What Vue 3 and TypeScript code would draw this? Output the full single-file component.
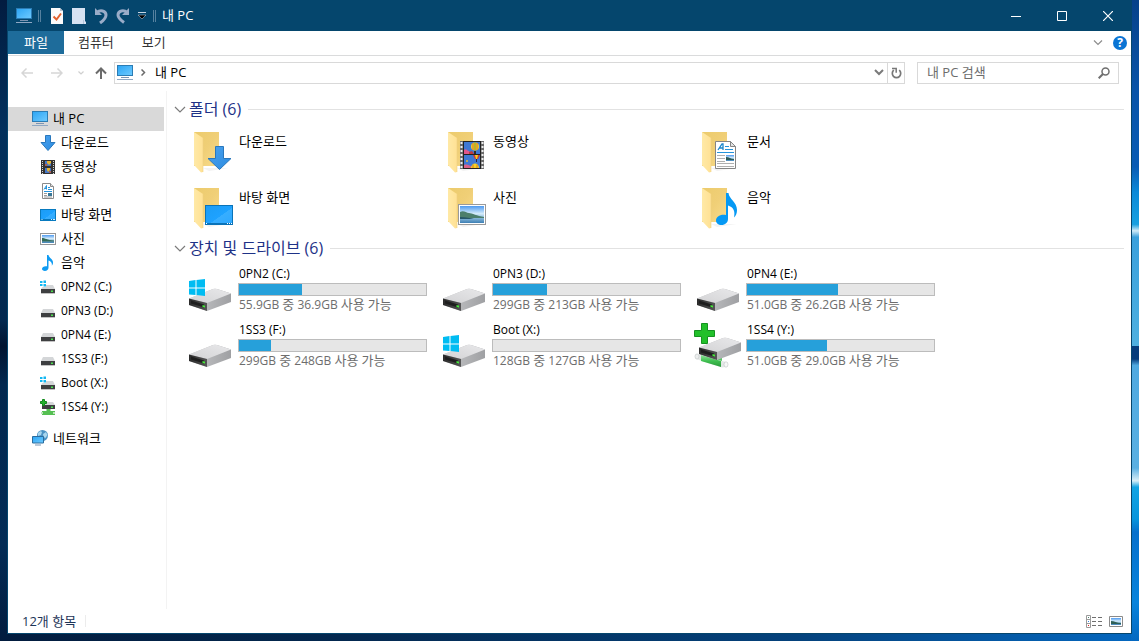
<script setup lang="ts">
import { ref } from 'vue'

interface NavItem {
  label: string
  icon: string
  latin?: boolean
}
interface Folder {
  label: string
  icon: string
}
interface Drive {
  label: string
  icon: string
  total: string
  free: string
  used: number
}

const places: NavItem[] = [
  { label: '다운로드', icon: 's-download' },
  { label: '동영상', icon: 's-video' },
  { label: '문서', icon: 's-doc' },
  { label: '바탕 화면', icon: 's-desktop' },
  { label: '사진', icon: 's-photo' },
  { label: '음악', icon: 's-music' },
  { label: '0PN2 (C:)', icon: 's-windrive', latin: true },
  { label: '0PN3 (D:)', icon: 's-drive', latin: true },
  { label: '0PN4 (E:)', icon: 's-drive', latin: true },
  { label: '1SS3 (F:)', icon: 's-drive', latin: true },
  { label: 'Boot (X:)', icon: 's-windrive', latin: true },
  { label: '1SS4 (Y:)', icon: 's-netdrive', latin: true },
]

const folders: Folder[] = [
  { label: '다운로드', icon: 'l-download' },
  { label: '동영상', icon: 'l-video' },
  { label: '문서', icon: 'l-doc' },
  { label: '바탕 화면', icon: 'l-desktop' },
  { label: '사진', icon: 'l-photo' },
  { label: '음악', icon: 'l-music' },
]

const drives: Drive[] = [
  { label: '0PN2 (C:)', icon: 'l-windrive', total: '55.9GB', free: '36.9GB', used: 33.7 },
  { label: '0PN3 (D:)', icon: 'l-drive', total: '299GB', free: '213GB', used: 29 },
  { label: '0PN4 (E:)', icon: 'l-drive', total: '51.0GB', free: '26.2GB', used: 48.6 },
  { label: '1SS3 (F:)', icon: 'l-drive', total: '299GB', free: '248GB', used: 17 },
  { label: 'Boot (X:)', icon: 'l-windrive', total: '128GB', free: '127GB', used: 0 },
  { label: '1SS4 (Y:)', icon: 'l-netdrive', total: '51.0GB', free: '29.0GB', used: 43 },
]

const query = ref('')
const foldersOpen = ref(true)
const drivesOpen = ref(true)
</script>

<template>
  <div class="desktop">
    <svg class="defs" aria-hidden="true">
      <defs>
        <linearGradient id="g-screen" x1="0" y1="0" x2="1" y2="1">
          <stop offset="0" stop-color="#2aa4f4" /><stop offset="1" stop-color="#6fcbff" />
        </linearGradient>
        <linearGradient id="g-desk" x1="0" y1="0" x2="1" y2="1">
          <stop offset="0" stop-color="#1b9cf5" /><stop offset=".55" stop-color="#1ea2ff" />
          <stop offset=".56" stop-color="#37aeff" /><stop offset="1" stop-color="#2ea8ff" />
        </linearGradient>
        <linearGradient id="g-back" x1="0" y1="0" x2="1" y2="1">
          <stop offset="0" stop-color="#eccb6c" /><stop offset=".5" stop-color="#f0cf77" /><stop offset="1" stop-color="#f9dc8c" />
        </linearGradient>
        <linearGradient id="g-front" x1="0" y1="0" x2="1" y2="0">
          <stop offset="0" stop-color="#ffe9a6" /><stop offset="1" stop-color="#ffe194" />
        </linearGradient>
        <linearGradient id="g-top" x1="0" y1="1" x2="1" y2="0">
          <stop offset="0" stop-color="#d3d3d5" /><stop offset="1" stop-color="#e8e8ea" />
        </linearGradient>
        <linearGradient id="g-side" x1="0" y1="0" x2="1" y2="0">
          <stop offset="0" stop-color="#c8c9cb" /><stop offset="1" stop-color="#9fa0a3" />
        </linearGradient>
        <linearGradient id="g-face" x1="0" y1="0" x2="1" y2="0">
          <stop offset="0" stop-color="#2b2b2b" /><stop offset="1" stop-color="#555" />
        </linearGradient>
        <linearGradient id="g-sky" x1="0" y1="0" x2="0" y2="1">
          <stop offset="0" stop-color="#4e9af0" /><stop offset=".45" stop-color="#d5ecfa" />
          <stop offset=".62" stop-color="#9fc9e4" /><stop offset="1" stop-color="#3d7fb4" />
        </linearGradient>
        <linearGradient id="g-arrow" x1="0" y1="0" x2="1" y2="1">
          <stop offset="0" stop-color="#4ba2ee" /><stop offset="1" stop-color="#2b8be0" />
        </linearGradient>
        <linearGradient id="g-pipe" x1="0" y1="0" x2="0" y2="1">
          <stop offset="0" stop-color="#8fe29a" /><stop offset=".5" stop-color="#3fbf50" /><stop offset="1" stop-color="#2c9a3b" />
        </linearGradient>
      </defs>

      <symbol id="s-pc" viewBox="0 0 16 16">
        <rect x="0.5" y="0.5" width="15" height="10" fill="url(#g-screen)" stroke="#2b7cb4" />
        <path d="M4 12.500h8" stroke="#7c95b3" /><path d="M0 14.500h16" stroke="#8fa8c4" />
      </symbol>
      <symbol id="s-download" viewBox="0 0 16 16">
        <path d="M5.500.5h5v7H15L8 15.500 1 7.500h4.500z" fill="url(#g-arrow)" stroke="#2a78bd" />
      </symbol>
      <symbol id="s-video" viewBox="0 0 16 16">
        <rect x="1" y="1" width="14" height="14" fill="#333" />
        <path d="M2.500 2v13M13.500 2v13" stroke="#d4d4d4" stroke-dasharray="1 1" />
        <path d="M5 2h6v5H5zM5 9h6v5H5z" fill="#4678c8" />
        <path d="M7 2h4v2L9 6 7 4zM7 9h3v2l-2 2-1-2z" fill="#e6b431" />
        <path d="M5 5h2v2H5zM9 12h2v2H9z" fill="#a8605a" />
      </symbol>
      <symbol id="s-doc" viewBox="0 0 16 16">
        <path d="M2.500.5h8l3 3v12h-11z" fill="#fff" stroke="#8a8a8a" />
        <path d="M10.500.5v3h3" fill="#ddd" stroke="#8a8a8a" />
        <path d="M4 6.500L6.500 2.500v4M5 5.500h2M8 4.500h2M8 6.500h4M4 8.500h8" fill="none" stroke="#2493db" />
        <path d="M4 10.500h3M4 12.500h3M4 14h8" stroke="#9b9b9b" />
        <path d="M8 10h4v3H8z" fill="#387696" />
      </symbol>
      <symbol id="s-desktop" viewBox="0 0 16 16">
        <rect x="0.5" y="2.500" width="15" height="11" fill="url(#g-desk)" stroke="#087abf" />
        <path d="M1 12.500h14" stroke="#0878bd" /><path d="M1.500 12.500h1M11 12.500h1M13 12.500h2" stroke="#d7efff" />
      </symbol>
      <symbol id="s-photo" viewBox="0 0 16 16">
        <rect x="0.5" y="2.500" width="15" height="11" fill="#fff" stroke="#969696" />
        <rect x="2" y="4" width="12" height="8" fill="url(#g-sky)" />
        <path d="M2 7c3 0 5 2 12 2.500v1H2z" fill="#356b58" />
      </symbol>
      <symbol id="s-music" viewBox="0 0 16 16">
        <path d="M7 0h1.500c.3 3 5 3.800 4.500 8.300-.1 1-.5 1.800-1.200 2.400.5-3-1-4.500-3.300-5.200v7.300c0 1.800-1.600 3.200-3.600 3.200-1.700 0-2.900-.9-2.900-2.200 0-1.700 2-3 5-2.600z" fill="#0f9bf2" />
      </symbol>
      <symbol id="s-drive" viewBox="0 0 16 16">
        <path d="M3 6h10l2 4H1z" fill="#d4d6d8" /><path d="M1 10h14v4H1z" fill="#3e3f41" />
        <path d="M1 14h14v.7H1z" fill="#aaa" /><path d="M11 11.500h2v1.500h-2z" fill="#4ae04e" />
      </symbol>
      <symbol id="s-windrive" viewBox="0 0 16 16">
        <path d="M4 6h9l2 4H1z" fill="#d4d6d8" /><path d="M1 10h14v4H1z" fill="#3e3f41" />
        <path d="M1 14h14v.7H1z" fill="#aaa" /><path d="M11 11.500h2v1.500h-2z" fill="#4ae04e" />
        <path d="M0 1h6v7H0z" fill="#fff" />
        <path d="M0 2h2.500v2H0zM3.500 1.500h2.500V4H3.500zM0 5h2.500v2H0zM3.500 5h2.500v2.500H3.500z" fill="#12b7f2" />
      </symbol>
      <symbol id="s-netdrive" viewBox="0 0 16 16">
        <path d="M4 3h9l2 3H2z" fill="#d4d6d8" /><path d="M2 6h13v4H2z" fill="#3e3f41" />
        <path d="M11 7.500h2V9h-2z" fill="#4ae04e" />
        <path d="M6.500 10h4v2H15v4H2v-4h4.500z" fill="#55c052" /><path d="M1 13h2v2H1zM13 13h2v2h-2z" fill="#bce5b9" />
        <path d="M2.500.5h2v2h2v2h-2v2h-2v-2h-2v-2h2z" fill="#22b52c" stroke="#128a1c" />
      </symbol>
      <symbol id="s-network" viewBox="0 0 16 16">
        <circle cx="10.500" cy="5.500" r="5.500" fill="#4c93c4" />
        <path d="M6 3c2-2 3-2 4-1L9 5 6 6zM11 4l3-2 1.500 3-2 3-2-1z" fill="#a9d6ee" />
        <path d="M.5 6.500h11v6.500H.5z" fill="url(#g-screen)" stroke="#2b6c9d" />
        <path d="M3 15h6" stroke="#7895b3" />
      </symbol>

      <symbol id="folder" viewBox="0 0 48 48">
        <path d="M17 40h26l-20 3z" fill="#f3f3f3" />
        <path d="M8 4h25v34H8z" fill="url(#g-back)" />
        <path d="M8 4l9 6v34l-2 .5L8 37z" fill="url(#g-front)" />
        <path d="M17 10v34" stroke="#efd083" stroke-width=".6" />
      </symbol>
      <symbol id="l-download" viewBox="0 0 48 48">
        <use href="#folder" />
        <path d="M29.500 18.500h8v12H45L33.500 41.500 22 30.500h7.500z" fill="url(#g-arrow)" stroke="#2a78bd" />
      </symbol>
      <symbol id="l-video" viewBox="0 0 48 48">
        <use href="#folder" />
        <rect x="20" y="13" width="24" height="28" fill="#6a6a6a" />
        <path d="M21.500 14v27M42.500 14v27" stroke="#eee" stroke-width="2" stroke-dasharray="2 2" />
        <rect x="23" y="13" width="18" height="28" fill="#222" />
        <path d="M24 14h16v12H24zM24 27h16v13H24z" fill="#3f78d4" />
        <path d="M24 22c2-2 3 1 5 1l2 3h-7z" fill="#e0568c" /><path d="M29 24l3-1 2 3h-5z" fill="#c23b3b" />
        <path d="M24 37c3-1 5 0 8 2v1h-8z" fill="#d9628a" />
        <ellipse cx="35" cy="18.500" rx="4" ry="4" fill="#f4d226" />
        <path d="M33 15v7M37 15v7" stroke="#d8742a" /><path d="M35 14.500v8" stroke="#7a9a2c" /><path d="M34 23h2v3h-2z" fill="#3b2a22" />
        <path d="M33 27h7l-2 4h-3z" fill="#d23a2e" /><path d="M35 27h3l-1 4h-1z" fill="#f4d226" /><path d="M36 31h1v3h-1z" fill="#2a2340" />
        <path d="M31 40c0-6 8-6 8 0z" fill="#f4d226" /><path d="M33 36.500V40M37 36.500V40" stroke="#d8742a" />
        <circle cx="27" cy="33" r="1" fill="#e7ba34" />
      </symbol>
      <symbol id="l-doc" viewBox="0 0 48 48">
        <use href="#folder" />
        <path d="M21.500 13.500h15l5 5v22h-20z" fill="#fff" stroke="#858585" />
        <path d="M36.500 13.500v5h5z" fill="#e2e2e2" stroke="#858585" />
        <path d="M24 22l4-6h1v6M25.500 20h4" fill="none" stroke="#1b86cb" stroke-width="1.300" />
        <path d="M31 18.500h4M31 21.500h8M23 24.500h17" stroke="#2493db" />
        <path d="M23 27.500h8M23 30.500h8M23 33.500h8M23 35.500h17M23 38.500h17" stroke="#b0b0b0" />
        <rect x="32" y="27" width="8" height="6" fill="url(#g-sky)" /><path d="M32 29c3 0 5 2 8 2v1h-8z" fill="#2c5a58" />
      </symbol>
      <symbol id="l-desktop" viewBox="0 0 48 48">
        <use href="#folder" />
        <rect x="19.500" y="21.500" width="27" height="19" fill="url(#g-desk)" stroke="#0a73b8" />
        <path d="M20 39.500h26" stroke="#0a73b8" /><path d="M20 39.500h1M41 39.500h1M43 39.500h1M45 39.500h1" stroke="#fff" />
      </symbol>
      <symbol id="l-photo" viewBox="0 0 48 48">
        <use href="#folder" />
        <rect x="18.500" y="20.500" width="27" height="20" fill="#fff" stroke="#9a9a9a" />
        <rect x="20" y="22" width="24" height="17" fill="url(#g-sky)" />
        <path d="M20 28c4-2 6 1 9 1s8 3 15 4v1H20z" fill="#4c7f6c" /><path d="M20 33c6 0 10 1 14 2H20z" fill="#26576a" />
      </symbol>
      <symbol id="l-music" viewBox="0 0 48 48">
        <use href="#folder" />
        <path d="M32 9h2.500c.5 6 8.500 9 8.500 17 0 3-1 6-3 7.500 1.500-7-1-10.500-6-12V35c0 3.500-3 6-6.500 6-3.300 0-5.500-1.800-5.500-4.500 0-3.600 4-6.500 10-5.500z" fill="#0599f4" />
      </symbol>
      <symbol id="drivebody" viewBox="0 0 48 48">
        <path d="M3 31.500L27 22q2-.6 4 0l14 4.500v8.500L21 44 3 38z" fill="url(#g-side)" />
        <path d="M3 31.500L27 22q2-.6 4 0l14 4.500L21 36z" fill="url(#g-top)" />
        <path d="M3 31.500L21 36v8L3 38z" fill="url(#g-face)" />
        <path d="M5 33.500l13 4v3L5 36.500z" fill="#1e1e1e" />
        <path d="M16.500 38l2.500.7v1.800l-2.500-.6z" fill="#46ec3a" />
      </symbol>
      <symbol id="l-drive" viewBox="0 0 48 48"><use href="#drivebody" /></symbol>
      <symbol id="l-windrive" viewBox="0 0 48 48">
        <use href="#drivebody" />
        <path d="M3 14l6.500-1v7.500H3zM10.500 13L19 12v8.500h-8.500zM3 21.500h6.500V28L3 27.500zM10.500 21.500H19V29l-8.500-1z" fill="#00bcf2" />
      </symbol>
      <symbol id="l-netdrive" viewBox="0 0 48 48">
        <path d="M19 34h9v5l-9 1z" fill="#56c364" />
        <path d="M2 31l30 8v5l-4 .5L2 36z" fill="#e3e7e6" /><path d="M7 32l20 6v6L7 38z" fill="url(#g-pipe)" />
        <ellipse cx="3" cy="33.500" rx="2" ry="2.600" fill="#eceeee" stroke="#bfc5c4" stroke-width=".6" />
        <ellipse cx="32" cy="41.500" rx="2" ry="2.700" fill="#f6f7f7" stroke="#bfc5c4" stroke-width=".6" />
        <use href="#drivebody" x="2" y="-7" width="48" height="48" />
        <path d="M7.500.5h6v7h7v6h-7v7h-6v-7h-7v-6h7z" fill="#22c02a" stroke="#159220" />
      </symbol>
    </svg>

    <main class="window">
      <header class="titlebar">
        <svg class="i16" aria-hidden="true"><use href="#s-pc" /></svg>
        <span class="grip"></span>
        <div class="quick">
          <button type="button" aria-label="속성">
            <svg width="14" height="16" viewBox="0 0 14 16"><path d="M1 0h9l3 3v13H1z" fill="#fbfbfb" /><path d="M10 0v3h3z" fill="#b8c4d0" /><path d="M3.500 8.500l3 3 4.500-6" fill="none" stroke="#e2622f" stroke-width="2" /></svg>
          </button>
          <button type="button" aria-label="새 폴더">
            <svg width="14" height="16" viewBox="0 0 14 16"><path d="M0 0h13v13l1 1v2H0z" fill="#d6e2f3" /><path d="M11.500 12v4" stroke="#b3c4db" /></svg>
          </button>
          <button type="button" aria-label="실행 취소">
            <svg width="14" height="16" viewBox="0 0 14 16"><path d="M1 0v7h7z" fill="#9aacc8" /><path d="M3 4.500c3-3 9-2 9 2.500 0 3-2.500 5.500-6 8" fill="none" stroke="#9aacc8" stroke-width="3" /></svg>
          </button>
          <button type="button" aria-label="다시 실행">
            <svg width="14" height="16" viewBox="0 0 14 16"><path d="M13 0v7H6z" fill="#9aacc8" /><path d="M11 4.500C8 1.500 2 2.500 2 7c0 3 2.500 5 6 7.500" fill="none" stroke="#9aacc8" stroke-width="3" /></svg>
          </button>
          <button type="button" class="more" aria-label="빠른 실행 도구 모음 사용자 지정">
            <svg width="8" height="7" viewBox="0 0 8 7"><path d="M0 .5h8" stroke="#c7d5e3" /><path d="M0 3h8L4 7z" fill="#000" stroke="#c7d5e3" stroke-width=".5" /></svg>
          </button>
        </div>
        <span class="grip"></span>
        <h1>내 PC</h1>
        <div class="controls">
          <button type="button" aria-label="최소화"><svg width="10" height="10"><path d="M0 5.500h10" stroke="#fff" /></svg></button>
          <button type="button" aria-label="최대화"><svg width="10" height="10"><path d="M.5.5h9v9h-9z" fill="none" stroke="#fff" /></svg></button>
          <button type="button" aria-label="닫기"><svg width="10" height="10"><path d="M0 0l10 10M10 0L0 10" stroke="#fff" stroke-width="1.200" /></svg></button>
        </div>
      </header>

      <div class="ribbon">
        <button type="button" class="tab file">파일</button>
        <button type="button" class="tab">컴퓨터</button>
        <button type="button" class="tab">보기</button>
        <span class="spacer"></span>
        <button type="button" class="plain" aria-label="리본 확장">
          <svg width="10" height="6"><path d="M1 .5l4 4 4-4" fill="none" stroke="#8d8d8d" stroke-width="1.200" /></svg>
        </button>
        <button type="button" class="help" aria-label="도움말">?</button>
      </div>

      <div class="navbar">
        <button type="button" class="arrow" aria-label="뒤로">
          <svg width="12" height="10"><path d="M12 5H1M5.500.5L1 5l4.500 4.500" fill="none" stroke="#d6d6d6" stroke-width="1.500" /></svg>
        </button>
        <button type="button" class="arrow" aria-label="앞으로">
          <svg width="12" height="10"><path d="M0 5h11M6.500.5L11 5 6.500 9.500" fill="none" stroke="#d6d6d6" stroke-width="1.500" /></svg>
        </button>
        <button type="button" class="recent" aria-label="최근 위치">
          <svg width="6" height="4"><path d="M.5.5L3 3 5.500.5" fill="none" stroke="#cfcfcf" stroke-width="1.200" /></svg>
        </button>
        <button type="button" class="up" aria-label="위로">
          <svg width="12" height="12"><path d="M6 12V1.500M1 6.500l5-5 5 5" fill="none" stroke="#6b6b6b" stroke-width="2" /></svg>
        </button>
        <div class="address">
          <svg class="i16" aria-hidden="true"><use href="#s-pc" /></svg>
          <svg class="crumb" width="5" height="7"><path d="M.5.5l3 3-3 3" fill="none" stroke="#6b6b6b" stroke-width="1.500" /></svg>
          <a href="#pc">내 PC</a>
          <span class="spacer"></span>
          <button type="button" class="drop" aria-label="이전 위치">
            <svg width="10" height="7"><path d="M1 1l4 4 4-4" fill="none" stroke="#7a7a7a" stroke-width="2" /></svg>
          </button>
          <button type="button" class="refresh" aria-label="새로 고침">
            <svg width="11" height="12" viewBox="0 0 11 12"><path d="M8.200 3.200a4.200 4.200 0 1 1-5.400 0" fill="none" stroke="#777" stroke-width="1.700" /><path d="M1 1.500h4.200v4.200" fill="none" stroke="#777" stroke-width="1.500" /></svg>
          </button>
        </div>
        <label class="search">
          <input v-model="query" type="search" placeholder="내 PC 검색" aria-label="내 PC 검색" />
          <svg width="12" height="12" viewBox="0 0 12 12"><circle cx="7.500" cy="4.500" r="3.500" fill="none" stroke="#6f6f6f" stroke-width="1.500" /><path d="M5 7L.7 11.300" stroke="#6f6f6f" stroke-width="2" /></svg>
        </label>
      </div>

      <div class="body">
        <nav class="tree">
          <a href="#pc" class="node root selected"><svg class="i16" aria-hidden="true"><use href="#s-pc" /></svg><span class="text">내 PC</span></a>
          <a v-for="p in places" :key="p.label" href="#pc" class="node" :class="{ latin: p.latin }">
            <svg class="i16" aria-hidden="true"><use :href="'#' + p.icon" /></svg><span class="text">{{ p.label }}</span>
          </a>
          <a href="#network" class="node root network"><svg class="i16" aria-hidden="true"><use href="#s-network" /></svg><span class="text">네트워크</span></a>
        </nav>

        <div class="content">
          <section>
            <h2>
              <button type="button" :aria-expanded="foldersOpen" @click="foldersOpen = !foldersOpen">
                <svg width="12" height="7"><path d="M1 1l5 5 5-5" fill="none" stroke="#7b7b7b" stroke-width="1.200" /></svg>
                폴더 (6)
              </button>
            </h2>
            <div v-if="foldersOpen" class="grid">
              <a v-for="f in folders" :key="f.label" href="#folder" class="tile">
                <svg class="i48" aria-hidden="true"><use :href="'#' + f.icon" /></svg>
                <span class="name">{{ f.label }}</span>
              </a>
            </div>
          </section>
          <section>
            <h2>
              <button type="button" :aria-expanded="drivesOpen" @click="drivesOpen = !drivesOpen">
                <svg width="12" height="7"><path d="M1 1l5 5 5-5" fill="none" stroke="#7b7b7b" stroke-width="1.200" /></svg>
                장치 및 드라이브 (6)
              </button>
            </h2>
            <div v-if="drivesOpen" class="grid">
              <a v-for="d in drives" :key="d.label" href="#drive" class="tile">
                <svg class="i48" aria-hidden="true"><use :href="'#' + d.icon" /></svg>
                <span class="info">
                  <span class="drive-name">{{ d.label }}</span>
                  <span class="meter"><span class="fill" :style="{ width: d.used + '%' }"></span></span>
                  <span class="space">{{ d.total }} <span class="ko">중</span> {{ d.free }} <span class="ko">사용</span> <span class="ko">가능</span></span>
                </span>
              </a>
            </div>
          </section>
        </div>
      </div>

      <footer class="status">
        <span class="count">12개 항목</span>
        <span class="spacer"></span>
        <button type="button" class="plain" aria-label="자세히">
          <svg width="16" height="13"><path d="M.5.5h4v12h-4zM.5 4.500h4M.5 8.500h4" fill="#fff" stroke="#9a9a9a" /><path d="M6 2.500h4M12 2.500h4M6 6.500h4M12 6.500h4M6 10.500h4M12 10.500h4" stroke="#6f6f6f" /><path d="M2 2h1v1H2z" fill="#4a7f6c" /><path d="M2 6h1v1H2z" fill="#3b83e0" /><path d="M2 10h1v1H2z" fill="#e02020" /></svg>
        </button>
        <button type="button" class="plain" aria-label="큰 아이콘">
          <svg width="14" height="11"><path d="M.5.5h13v10H.5z" fill="#fff" stroke="#8a8a8a" /><path d="M2 2h10v7H2z" fill="url(#g-sky)" /><path d="M2 5c3 0 6 2 10 2v1H2z" fill="#2f6158" /></svg>
        </button>
      </footer>
    </main>
  </div>
</template>

<style>
body {
  margin: 0;
}
</style>

<style scoped>
.desktop {
  box-sizing: border-box;
  height: 100vh;
  min-height: 540px;
  padding: 0 7px 7px;
  font: 13px/16px "Open Sans", "Noto Sans CJK KR", sans-serif;
  color: #000;
  background:
    linear-gradient(#06418a 0%, #0a55a8 14%, #0a5cb4 26%, #0c8ad8 30%, #18a0e0 35%, #d0eaf6 36%, #3aa0dc 37%, #4fb0e0 54%, #063c7c 54%, #063c7c 56%, #4fa9e0 57%, #5ab0e2 73%, #d8eef6 75%, #12a4e4 76%, #0894dc 81%, #0670cc 83%, #0884dc 94%, #0468c0 100%) right / 8px 100% no-repeat,
    linear-gradient(#021c40 0%, #02305c 20%, #02284f 50%, #011430 54%, #02284f 60%, #032c56 85%, #021c3e 100%) left / 8px 100% no-repeat,
    linear-gradient(90deg, #021c3e, #03284f 30%, #04427c 70%, #0468c0);
}
.defs {
  position: absolute;
  width: 0;
  height: 0;
}
.window {
  box-sizing: border-box;
  height: 100%;
  display: flex;
  flex-direction: column;
  background: #fff;
  border: 1px solid #05466d;
  border-top: 0;
}
svg {
  display: block;
  flex: none;
}
.i16 {
  width: 16px;
  height: 16px;
}
.i48 {
  width: 48px;
  height: 48px;
}
button {
  font: inherit;
  color: inherit;
  background: none;
  border: 0;
  padding: 0;
  display: flex;
  align-items: center;
  justify-content: center;
}
a {
  color: inherit;
  text-decoration: none;
}
.spacer {
  flex: 1;
}
.titlebar {
  height: 31px;
  flex: none;
  display: flex;
  align-items: center;
  padding-left: 8px;
  background: #05466d;
  color: #fff;
}
.grip {
  width: 1px;
  height: 12px;
  margin: 0 6px;
  border: solid #56819f;
  border-width: 0 1px;
}
.quick {
  display: flex;
  align-items: center;
  gap: 8px;
  margin: 0 1px 0 3px;
}
.titlebar h1 {
  font: inherit;
  margin: 0;
  padding-bottom: 2px;
  flex: 1;
}
.controls {
  display: flex;
  align-self: stretch;
}
.controls button {
  width: 46px;
}
.ribbon {
  height: 24px;
  flex: none;
  display: flex;
  align-items: flex-start;
  border-bottom: 1px solid #dadbdc;
}
.tab {
  height: 23px;
  padding: 0 14px 2px;
  color: #333;
}
.tab.file {
  padding: 0 16px 2px;
  background: #1e6c9b;
  color: #fff;
}
.plain {
  height: 24px;
}
.help {
  width: 14px;
  height: 14px;
  margin: 5px 4px 0 10px;
  border-radius: 50%;
  background: #0a74d4;
  color: #fff;
  font-size: 12px;
  font-weight: 700;
}
.navbar {
  height: 33px;
  flex: none;
  display: flex;
  align-items: center;
  padding: 0 12px 2px 13px;
}
.arrow {
  margin-right: 18px;
}
.recent {
  margin: 0 11px 0 -3px;
}
.up {
  margin-right: 7px;
}
.address {
  box-sizing: border-box;
  height: 22px;
  flex: 1;
  display: flex;
  align-items: center;
  padding-left: 2px;
  border: 1px solid #d9d9d9;
}
.address a {
  padding-bottom: 2px;
}
.crumb {
  margin: 0 9px 0 8px;
}
.drop {
  width: 17px;
}
.refresh {
  align-self: stretch;
  width: 17px;
  border-left: 1px solid #d9d9d9;
}
.search {
  box-sizing: border-box;
  flex: 0 0 202px;
  height: 22px;
  margin-left: 12px;
  padding: 0 8px 0 9px;
  display: flex;
  align-items: center;
  border: 1px solid #d9d9d9;
}
.search input {
  flex: 1;
  min-width: 0;
  padding: 0 0 2px;
  border: 0;
  outline: 0;
  background: none;
  font: inherit;
}
.search input::placeholder {
  color: #6d6d6d;
  opacity: 1;
}
.body {
  flex: 1;
  min-height: 0;
  display: flex;
}
.tree {
  width: 156px;
  flex: none;
  padding: 16px 2px 0 0;
  border-right: 1px solid #f3f3f3;
}
.node {
  height: 24px;
  display: flex;
  align-items: center;
  gap: 5px;
  padding-left: 32px;
  white-space: nowrap;
}
.text {
  padding-bottom: 2px;
}
.node.root {
  padding-left: 24px;
}
.node.selected {
  background: #d9d9d9;
}
.node.latin {
  font-size: 12px;
}
.latin .text,
.network .text {
  padding-bottom: 0;
}
.node.network {
  margin-top: 7px;
}
.content {
  flex: 1;
  min-width: 0;
  padding: 6px 7px 0;
}
h2 {
  height: 24px;
  margin: 0 0 3px;
  display: flex;
  align-items: center;
  gap: 7px;
  font: 16px/24px "Open Sans", "Noto Sans CJK KR", sans-serif;
  color: #1e3287;
}
h2::after {
  content: "";
  flex: 1;
  height: 1px;
  background: #e2e2e2;
}
h2 button {
  gap: 3px;
}
.grid {
  display: grid;
  grid-template-columns: repeat(auto-fill, 254px);
  grid-auto-rows: 56px;
  padding-left: 12px;
}
.tile {
  display: flex;
  gap: 4px;
  padding-top: 4px;
}
.name {
  padding: 5px 0 0 1px;
}
.info {
  width: 189px;
  display: flex;
  flex-direction: column;
  white-space: nowrap;
}
.drive-name {
  font-size: 12px;
  line-height: 14px;
  padding: 0 0 2px 1px;
}
.meter {
  box-sizing: border-box;
  height: 13px;
  display: flex;
  background: #e6e6e6;
  border: 1px solid #bcbcbc;
}
.fill {
  background: #26a0da;
}
.space {
  padding-left: 1px;
  font-size: 12px;
  color: #6d6d6d;
}
.ko {
  font-size: 13px;
}
.status {
  height: 24px;
  flex: none;
  display: flex;
  align-items: center;
  gap: 7px;
  padding: 0 8px 0 14px;
  color: #1d3557;
}
.count {
  padding-right: 9px;
  line-height: 12px;
  border-right: 1px solid #ececec;
}
</style>
